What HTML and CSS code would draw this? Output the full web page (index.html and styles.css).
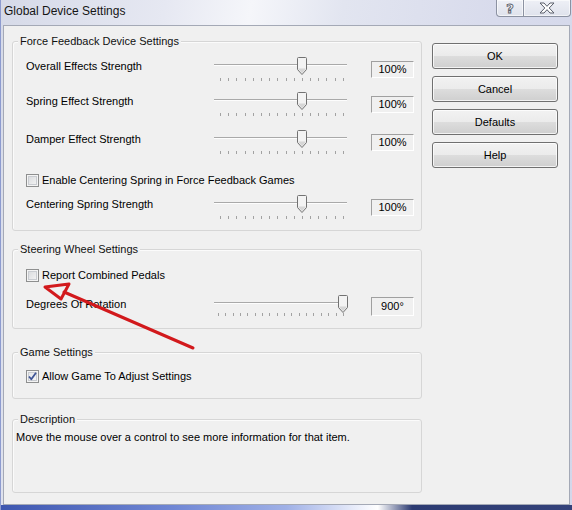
FILE: index.html
```html
<!DOCTYPE html>
<html>
<head>
<meta charset="utf-8">
<title>Global Device Settings</title>
<link rel="stylesheet" href="styles.css">
</head>
<body>
<div class="window">
  <div class="titlebar">
    <span class="title">Global Device Settings</span>
    <div class="caption">
      <div class="cbtn help">
        <svg width="12" height="14" viewBox="0 0 12 14"><text x="6" y="12" text-anchor="middle" class="qglyph">?</text></svg>
      </div>
      <div class="cbtn close">
        <svg width="16" height="12" viewBox="0 0 16 12"><path d="M1 1H5L8 4.3L11 1H15L10.2 6L15 11H11L8 7.7L5 11H1L5.8 6Z" fill="#fff" stroke="#5a5f6b" stroke-width="1" stroke-linejoin="round"/></svg>
      </div>
    </div>
  </div>

  <div class="client">
    <div class="left">
      <div class="group g1">
        <span class="legend">Force Feedback Device Settings</span>
        <div class="srow">
          <span class="lbl">Overall Effects Strength</span>
          <div class="slider">
            <div class="track"></div>
            <div class="ticks t16"><i></i><i></i><i></i><i></i><i></i><i></i><i></i><i></i><i></i><i></i><i></i><i></i><i></i><i></i><i></i><i></i></div>
            <svg class="thumb mid" width="10" height="18" viewBox="0 0 10 18"><path d="M1.5 0.5H8.5Q9.5 0.5 9.5 1.5V12.5L5 17.5L0.5 12.5V1.5Q0.5 0.5 1.5 0.5Z" class="thumbshape"/><path d="M1.5 11.5H8.5V12.3L5 16.2L1.5 12.3Z" fill="#d6d6d6"/></svg>
          </div>
          <span class="val">100%</span>
        </div>
        <div class="srow r2">
          <span class="lbl">Spring Effect Strength</span>
          <div class="slider">
            <div class="track"></div>
            <div class="ticks t16"><i></i><i></i><i></i><i></i><i></i><i></i><i></i><i></i><i></i><i></i><i></i><i></i><i></i><i></i><i></i><i></i></div>
            <svg class="thumb mid" width="10" height="18" viewBox="0 0 10 18"><path d="M1.5 0.5H8.5Q9.5 0.5 9.5 1.5V12.5L5 17.5L0.5 12.5V1.5Q0.5 0.5 1.5 0.5Z" class="thumbshape"/><path d="M1.5 11.5H8.5V12.3L5 16.2L1.5 12.3Z" fill="#d6d6d6"/></svg>
          </div>
          <span class="val">100%</span>
        </div>
        <div class="srow r3">
          <span class="lbl">Damper Effect Strength</span>
          <div class="slider">
            <div class="track"></div>
            <div class="ticks t16"><i></i><i></i><i></i><i></i><i></i><i></i><i></i><i></i><i></i><i></i><i></i><i></i><i></i><i></i><i></i><i></i></div>
            <svg class="thumb mid" width="10" height="18" viewBox="0 0 10 18"><path d="M1.5 0.5H8.5Q9.5 0.5 9.5 1.5V12.5L5 17.5L0.5 12.5V1.5Q0.5 0.5 1.5 0.5Z" class="thumbshape"/><path d="M1.5 11.5H8.5V12.3L5 16.2L1.5 12.3Z" fill="#d6d6d6"/></svg>
          </div>
          <span class="val">100%</span>
        </div>
        <div class="crow c1">
          <span class="cb"></span>
          <span>Enable Centering Spring in Force Feedback Games</span>
        </div>
        <div class="srow r4">
          <span class="lbl">Centering Spring Strength</span>
          <div class="slider">
            <div class="track"></div>
            <div class="ticks t16"><i></i><i></i><i></i><i></i><i></i><i></i><i></i><i></i><i></i><i></i><i></i><i></i><i></i><i></i><i></i><i></i></div>
            <svg class="thumb mid" width="10" height="18" viewBox="0 0 10 18"><path d="M1.5 0.5H8.5Q9.5 0.5 9.5 1.5V12.5L5 17.5L0.5 12.5V1.5Q0.5 0.5 1.5 0.5Z" class="thumbshape"/><path d="M1.5 11.5H8.5V12.3L5 16.2L1.5 12.3Z" fill="#d6d6d6"/></svg>
          </div>
          <span class="val">100%</span>
        </div>
      </div>

      <div class="group g2">
        <span class="legend">Steering Wheel Settings</span>
        <div class="crow">
          <span class="cb"></span>
          <span>Report Combined Pedals</span>
        </div>
        <div class="srow r5">
          <span class="lbl">Degrees Of Rotation</span>
          <div class="slider">
            <div class="track"></div>
            <div class="ticks t18"><i></i><i></i><i></i><i></i><i></i><i></i><i></i><i></i><i></i><i></i><i></i><i></i><i></i><i></i><i></i><i></i><i></i><i></i></div>
            <svg class="thumb max" width="10" height="18" viewBox="0 0 10 18"><path d="M1.5 0.5H8.5Q9.5 0.5 9.5 1.5V12.5L5 17.5L0.5 12.5V1.5Q0.5 0.5 1.5 0.5Z" class="thumbshape"/><path d="M1.5 11.5H8.5V12.3L5 16.2L1.5 12.3Z" fill="#d6d6d6"/></svg>
          </div>
          <span class="val wide">900°</span>
        </div>
      </div>

      <div class="group g3">
        <span class="legend">Game Settings</span>
        <div class="crow">
          <span class="cb checked"><svg width="11" height="11" viewBox="0 0 11 11"><path d="M2 5.5L4.3 8.3L9 1.8" fill="none" stroke="#3f5596" stroke-width="1.8" stroke-linejoin="round"/></svg></span>
          <span>Allow Game To Adjust Settings</span>
        </div>
      </div>

      <div class="group g4">
        <span class="legend">Description</span>
        <p class="desc">Move the mouse over a control to see more information for that item.</p>
      </div>
    </div>

    <div class="right">
      <button class="btn">OK</button>
      <button class="btn">Cancel</button>
      <button class="btn">Defaults</button>
      <button class="btn">Help</button>
    </div>
  </div>

  <div class="taskbar"></div>

  <svg class="arrow" width="572" height="510" viewBox="0 0 572 510">
    <polygon points="45,287 69,284 61,299" fill="none" stroke="#d2191c" stroke-width="3" stroke-linejoin="round"/>
    <line x1="64" y1="292" x2="193" y2="348" stroke="#d2191c" stroke-width="3" stroke-linecap="round"/>
  </svg>
</div>
</body>
</html>
```

FILE: styles.css
```css
* {
  box-sizing: border-box;
  margin: 0;
  padding: 0;
}

html, body {
  width: 572px;
  height: 510px;
  overflow: hidden;
}

body {
  font-family: "Liberation Sans", Arial, sans-serif;
  font-size: 11px;
  color: #000;
  background: #dfe2ee;
}

.window {
  position: relative;
  width: 572px;
  height: 510px;
  display: flex;
  flex-direction: column;
  background: linear-gradient(100deg, #d6dae8 0%, #e6e8f2 25%, #f5f6fa 38%, #e2e5f0 52%, #d8dbec 75%, #d3d7ea 100%);
  border-left: 1px solid #8d9bcf;
}

.titlebar {
  height: 25px;
  flex: none;
  display: flex;
  justify-content: space-between;
  align-items: flex-start;
  padding-left: 3px;
}

.title {
  font-family: "Liberation Sans", Arial, sans-serif;
  font-size: 12px;
  line-height: 14px;
  margin-top: 4px;
  color: #151515;
}

.caption {
  display: flex;
  margin-right: 1px;
}

.cbtn {
  height: 17px;
  border: 1px solid #8c92a2;
  border-top: none;
  background: linear-gradient(#eef0f6, #dfe2ec);
  display: flex;
  align-items: center;
  justify-content: center;
  box-shadow: inset 0 0 0 1px rgba(255, 255, 255, 0.6);
}

.cbtn.help {
  width: 28px;
  border-radius: 0 0 0 4px;
}

.cbtn.close {
  width: 47px;
  border-left: none;
  border-radius: 0 0 4px 0;
}

.qglyph {
  font-family: "DejaVu Sans", sans-serif;
  font-size: 13px;
  font-weight: bold;
  fill: #fff;
  stroke: #5a5f6b;
  stroke-width: 0.9;
}

.client {
  flex: none;
  height: 480px;
  margin: 0 2px 0 2px;
  border: 1px solid #a4a9b6;
  background: #f0f0f0;
  display: flex;
  padding: 15px 0 0 8px;
}

.left {
  width: 410px;
  flex: none;
}

.group {
  position: relative;
  border: 1px solid #d6d6d6;
  border-radius: 3px;
  box-shadow: inset 1px 1px 0 #fbfbfb;
  padding-left: 13px;
}

.legend {
  position: absolute;
  top: -8px;
  left: 5px;
  padding: 0 2px;
  background: #f0f0f0;
  line-height: 14px;
  color: #111;
}

.g1 {
  height: 190px;
  padding-top: 15px;
}

.g2 {
  height: 80px;
  margin-top: 18px;
  padding-top: 19px;
}

.g3 {
  height: 47px;
  margin-top: 23px;
  padding-top: 17px;
}

.g4 {
  height: 74px;
  margin-top: 20px;
  padding-top: 11px;
  padding-left: 3px;
}

.srow {
  display: grid;
  grid-template-columns: 188px 133px 43px;
  column-gap: 0;
  height: 30px;
  align-items: start;
}

.srow.r2 { margin-top: 5px; }
.srow.r3 { margin-top: 8px; }
.srow.r4 { margin-top: 8px; }
.srow.r5 { margin-top: 13px; }

.lbl {
  line-height: 18px;
  white-space: nowrap;
}

.slider {
  position: relative;
  height: 26px;
}

.track {
  position: absolute;
  left: 0;
  right: 0;
  top: 7px;
  height: 2px;
  border-top: 1px solid #a9a9a9;
  border-bottom: 1px solid #fdfdfd;
}

.ticks {
  position: absolute;
  top: 21px;
  height: 3px;
  display: flex;
  justify-content: space-between;
}

.ticks.t16 {
  left: 6px;
  width: 124px;
}

.ticks.t18 {
  left: 4px;
  width: 126px;
  top: 18px;
}

.ticks i {
  width: 1px;
  height: 3px;
  background: #a2a2a2;
}

.thumb {
  position: absolute;
  top: 0;
}

.thumb.mid { left: 83px; }
.thumb.max { left: 124px; }

.thumbshape {
  fill: #f3f3f3;
  stroke: #727272;
  stroke-width: 1;
}

.val {
  margin-left: 24px;
  margin-top: 4px;
  width: 43px;
  height: 17px;
  border: 1px solid;
  border-color: #a0a0a0 #ffffff #ffffff #a0a0a0;
  display: flex;
  align-items: center;
  justify-content: center;
  line-height: 15px;
}

.val.wide {
  margin-top: 2px;
  height: 19px;
}

.crow {
  display: flex;
  align-items: center;
  gap: 3px;
  height: 13px;
  line-height: 13px;
  white-space: nowrap;
}

.crow.c1 {
  margin-top: 14px;
  margin-bottom: 8px;
}

.cb {
  flex: none;
  width: 13px;
  height: 13px;
  border: 1px solid #8e8f8f;
  background: linear-gradient(135deg, #d5d7da, #f7f7f7);
  box-shadow: inset 0 0 0 1px #f4f4f4, inset 0 0 0 2px #c9ccd1;
  display: flex;
  align-items: center;
  justify-content: center;
}

.cb.checked {
  background: linear-gradient(135deg, #dfe1e6, #fafafa);
}

.desc {
  line-height: 13px;
  white-space: nowrap;
}

.right {
  margin-left: 10px;
  padding-top: 2px;
  display: flex;
  flex-direction: column;
  gap: 7px;
}

.btn {
  width: 126px;
  height: 26px;
  border: 1px solid #707070;
  border-radius: 3px;
  background: linear-gradient(#f2f2f2 0%, #ebebeb 50%, #dddddd 50%, #cfcfcf 100%);
  box-shadow: inset 0 0 0 1px rgba(255, 255, 255, 0.75);
  font-family: "Liberation Sans", Arial, sans-serif;
  font-size: 11px;
  color: #000;
  line-height: 24px;
  text-align: center;
}

.taskbar {
  flex: none;
  height: 5px;
  background: linear-gradient(90deg, #3e57b0 0%, #6f86d4 30%, #9fb0e6 50%, #e8ecfa 62%, #ffffff 66%, #2c3b72 72%, #34427a 100%);
}

.arrow {
  position: absolute;
  left: -1px;
  top: 0;
  pointer-events: none;
}
```
